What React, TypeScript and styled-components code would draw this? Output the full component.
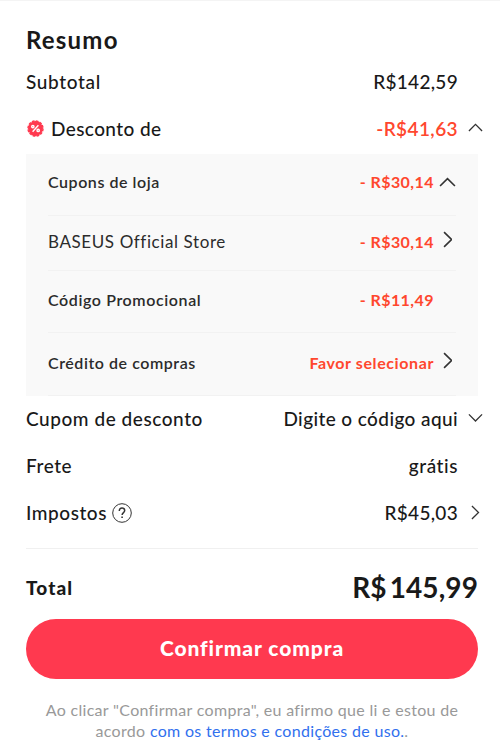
import React from "react";
import styled, { createGlobalStyle } from 'styled-components'


interface TextProps {
  $size?: number;
  $weight?: number;
  $spacing?: number;
  $color?: string;
}

interface ChevronProps {
  direction: "up" | "down" | "right";
  size?: number;
  stroke?: number;
}

const GlobalStyle = createGlobalStyle`
  * {
    box-sizing: border-box;
  }

  body {
    margin: 0;
    background: #fff;
    color: #191919;
    font-family: Lato, "Liberation Sans", sans-serif;
  }
`;

const Summary = styled.main`
  height: 756px;
  padding: 0 22px 0 26px;
  border-top: 1px solid #f4f4f4;
  overflow: hidden;
`;

const Title = styled.h1`
  margin: 22px 0 2px;
  font-size: 24px;
  line-height: 34px;
  font-weight: 700;
  letter-spacing: 1.2px;
`;

const Row = styled.div`
  display: flex;
  align-items: center;
  justify-content: space-between;
  height: 47px;
  margin-right: -5px;
  padding-bottom: 3px;
`;

const Label = styled.span<TextProps>`
  display: flex;
  align-items: center;
  font-size: ${(p) => p.$size ?? 19}px;
  font-weight: ${(p) => p.$weight ?? 500};
  letter-spacing: ${(p) => p.$spacing ?? 0.55}px;
  color: ${(p) => p.$color ?? "inherit"};
  white-space: pre;
`;

const Price = styled(Label)`
  letter-spacing: ${(p) => p.$spacing ?? 0.3}px;
`;

const RowEnd = styled.div`
  display: flex;
  align-items: center;
`;

const IconSlot = styled.span`
  display: flex;
  align-items: center;
  justify-content: center;
  width: 15px;
  margin-left: 10px;
`;

const Panel = styled.section`
  margin-top: 1px;
  padding: 0 22px;
  background: #f9f9f9;
`;

const PanelRow = styled.div<{ $height: number; $top: number }>`
  display: flex;
  align-items: flex-start;
  justify-content: space-between;
  height: ${(p) => p.$height}px;
  padding-top: ${(p) => p.$top}px;
  border-bottom: 1px solid #f2f2f2;
  line-height: 24px;
`;

const PanelLabel = styled(Label)`
  height: 24px;
  color: #2b2b2b;
`;

const PanelIcon = styled.span<{ $lift?: number }>`
  display: flex;
  align-items: center;
  justify-content: center;
  width: 24px;
  height: 24px;
  margin-right: -2px;
  padding-left: 3px;
  padding-bottom: ${(p) => p.$lift ?? 0}px;
`;

const BadgeIcon = styled.svg`
  margin: 1px 7px 0 1px;
`;

const HelpIcon = styled.svg`
  margin: 2px 0 0 5px;
`;

const TotalRow = styled.div`
  display: flex;
  align-items: center;
  justify-content: space-between;
  height: 71px;
  margin-top: 11px;
  padding-top: 6px;
  border-top: 1px solid #f0f0f0;
`;

const Currency = styled.span`
  margin-right: 3px;
`;

const ConfirmButton = styled.button`
  display: block;
  width: 100%;
  height: 60px;
  padding: 0 0 3px;
  border: none;
  border-radius: 30px;
  background: #ff394f;
  color: #fff;
  font-family: inherit;
  font-size: 21px;
  font-weight: 900;
  letter-spacing: 0.9px;
  cursor: pointer;
`;

const Terms = styled.p`
  margin: 20px 0 0;
  text-align: center;
  font-size: 16px;
  line-height: 21px;
  letter-spacing: 0.31px;
  color: #999;
  white-space: nowrap;
`;

const TermsLink = styled.a`
  color: #3170ee;
  text-decoration: none;
`;

const paths = {
  up: "M1 8.5 8 1.5 15 8.5",
  down: "M1 1.5 8 8.5 15 1.5",
  right: "M1 1 8 8 1 15",
};

const Chevron: React.FC<ChevronProps> = ({ direction, size = 15, stroke = 1.4 }) => {
  const right = direction === "right";
  const long = size;
  const short = right ? (size * 9) / 16 : (size * 10) / 16;

  return (
    <svg
      width={right ? short : long}
      height={right ? long : short}
      viewBox={right ? "0 0 9 16" : "0 0 16 10"}
      fill="none"
      stroke="#333"
      strokeWidth={stroke}
    >
      <path d={paths[direction]} />
    </svg>
  );
};

const Badge = () => (
  <BadgeIcon width="17" height="17" viewBox="0 0 16 16">
    <circle cx="8" cy="8" r="7" fill="#ff394f" />
    <circle cx="8" cy="8" r="7.1" fill="none" stroke="#ff394f" strokeWidth="1.3" strokeDasharray="2.6 1.118" />
    <g fill="none" stroke="#fff" strokeWidth="1.3">
      <path d="M10.7 5 5.3 11" />
      <circle cx="5.5" cy="6.2" r="1.1" />
      <circle cx="10.5" cy="9.8" r="1.1" />
    </g>
  </BadgeIcon>
);

const Help = () => (
  <HelpIcon width="20" height="20" viewBox="0 0 20 20" fill="none" stroke="#333">
    <circle cx="10" cy="10" r="9.3" strokeWidth="1" />
    <path d="M7.3 7.9C7.3 6.1 8.4 5.1 10 5.1s2.7 1 2.7 2.5c0 1.9-2.6 2.1-2.6 4.4" strokeWidth="1.5" />
    <path d="M10.1 13.4v1.7" strokeWidth="1.6" />
  </HelpIcon>
);

const RED = "#ff472e";

const App: React.FC = () => {
  return (
    <Summary>
      <GlobalStyle />
      <Title>Resumo</Title>
      <Row>
        <Label $spacing={0.65}>Subtotal</Label>
        <RowEnd>
          <Price>R$142,59</Price>
          <IconSlot />
        </RowEnd>
      </Row>
      <Row>
        <Label $spacing={0.4}>
          <Badge />
          Desconto de
        </Label>
        <RowEnd>
          <Price $color={RED} $weight={600} $spacing={0.4}>-R$41,63</Price>
          <IconSlot><Chevron direction="up" /></IconSlot>
        </RowEnd>
      </Row>

      <Panel>
        <PanelRow $height={62} $top={16}>
          <PanelLabel $size={16} $weight={600} $spacing={0.55}>Cupons de loja</PanelLabel>
          <RowEnd>
            <Price $size={16} $weight={700} $color={RED} $spacing={0.45}>- R$30,14</Price>
            <PanelIcon><Chevron direction="up" size={17} stroke={1.5} /></PanelIcon>
          </RowEnd>
        </PanelRow>
        <PanelRow $height={55} $top={14}>
          <PanelLabel $size={17} $weight={400} $spacing={0.6}>BASEUS Official Store</PanelLabel>
          <RowEnd>
            <Price $size={16} $weight={700} $color={RED} $spacing={0.45}>- R$30,14</Price>
            <PanelIcon $lift={5}><Chevron direction="right" size={17} stroke={1.5} /></PanelIcon>
          </RowEnd>
        </PanelRow>
        <PanelRow $height={62} $top={17}>
          <PanelLabel $size={16} $weight={600} $spacing={0.6}>Código Promocional</PanelLabel>
          <RowEnd>
            <Price $size={16} $weight={700} $color={RED} $spacing={0.45}>- R$11,49</Price>
            <PanelIcon />
          </RowEnd>
        </PanelRow>
        <PanelRow $height={63} $top={18}>
          <PanelLabel $size={16} $weight={600} $spacing={0.55}>Crédito de compras</PanelLabel>
          <RowEnd>
            <Price $size={16} $weight={700} $color={RED} $spacing={0.6}>Favor selecionar</Price>
            <PanelIcon $lift={5}><Chevron direction="right" size={17} stroke={1.5} /></PanelIcon>
          </RowEnd>
        </PanelRow>
      </Panel>

      <Row>
        <Label>Cupom de desconto</Label>
        <RowEnd>
          <Label $spacing={0.4}>Digite o código aqui</Label>
          <IconSlot><Chevron direction="down" /></IconSlot>
        </RowEnd>
      </Row>
      <Row>
        <Label>Frete</Label>
        <RowEnd>
          <Label>grátis</Label>
          <IconSlot />
        </RowEnd>
      </Row>
      <Row>
        <Label>
          Impostos
          <Help />
        </Label>
        <RowEnd>
          <Price>R$45,03</Price>
          <IconSlot><Chevron direction="right" /></IconSlot>
        </RowEnd>
      </Row>

      <TotalRow>
        <Label $weight={900} $spacing={1.1}>Total</Label>
        <Price $size={28} $weight={700} $spacing={0.1}>
          <Currency>R$</Currency>
          145,99
        </Price>
      </TotalRow>
      <ConfirmButton>Confirmar compra</ConfirmButton>
      <Terms>
        Ao clicar "Confirmar compra", eu afirmo que li e estou de
        <br />
        acordo <TermsLink>com os termos e condições de uso.</TermsLink>.
      </Terms>
    </Summary>
  );
};

export default App;
